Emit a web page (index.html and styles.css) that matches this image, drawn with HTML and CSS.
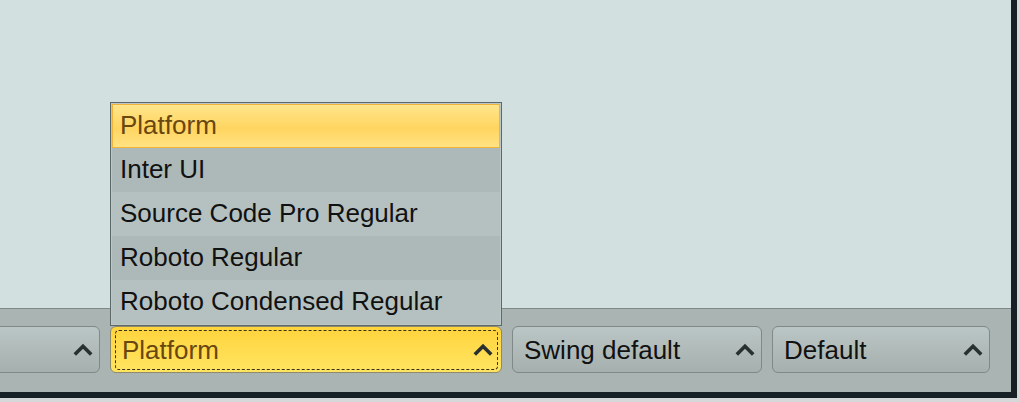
FILE: index.html
```html
<!DOCTYPE html>
<html>
<head>
<meta charset="utf-8">
<link rel="stylesheet" href="styles.css">
</head>
<body>
<div class="frame">
  <div class="content"></div>
  <div class="bar">
    <div class="combo combo-first">
      <span class="label"></span>
      <svg class="chev" width="20" height="14" viewBox="0 0 20 14"><polyline points="1.8,11.5 10,3.3 18.2,11.5"/></svg>
    </div>
    <div class="combo combo-active">
      <div class="focus"></div>
      <span class="label">Platform</span>
      <svg class="chev" width="20" height="14" viewBox="0 0 20 14"><polyline points="1.8,11.5 10,3.3 18.2,11.5"/></svg>
      <div class="popup">
        <div class="item selected">Platform</div>
        <div class="item odd">Inter UI</div>
        <div class="item even">Source Code Pro Regular</div>
        <div class="item odd">Roboto Regular</div>
        <div class="item even">Roboto Condensed Regular</div>
      </div>
    </div>
    <div class="combo combo-swing">
      <span class="label">Swing default</span>
      <svg class="chev" width="20" height="14" viewBox="0 0 20 14"><polyline points="1.8,11.5 10,3.3 18.2,11.5"/></svg>
    </div>
    <div class="combo combo-default">
      <span class="label">Default</span>
      <svg class="chev" width="20" height="14" viewBox="0 0 20 14"><polyline points="1.8,11.5 10,3.3 18.2,11.5"/></svg>
    </div>
  </div>
</div>
</body>
</html>
```
FILE: styles.css
```css
html, body {
  margin: 0;
  padding: 0;
}
body {
  background: #d4d8d8;
  width: 1020px;
  height: 402px;
  overflow: hidden;
  font-family: "Liberation Sans", Arial, Helvetica, sans-serif;
  font-size: 26px;
}
.frame {
  width: 1017px;
  height: 398px;
  box-sizing: border-box;
  border-right: 6px solid #172125;
  border-bottom: 6px solid #172125;
  display: flex;
  flex-direction: column;
  overflow: hidden;
}
.content {
  flex: 1;
  background: #d3e0e0;
}
.bar {
  height: 84px;
  box-sizing: border-box;
  border-top: 1px solid #7d8887;
  background: #aab4b2;
  display: flex;
  justify-content: flex-end;
  align-items: flex-start;
  gap: 10px;
  padding: 17px 21px 0 0;
}
.combo {
  position: relative;
  flex-shrink: 0;
  height: 47px;
  box-sizing: border-box;
  border: 1px solid #7f8988;
  border-radius: 6px;
  background: linear-gradient(#bac6c5, #a6b0ae);
  display: flex;
  align-items: center;
  padding: 0 6px 0 11px;
  color: #111;
  line-height: 44px;
}
.label {
  flex: 1;
  white-space: nowrap;
}
.chev {
  display: block;
  flex-shrink: 0;
}
.chev polyline {
  fill: none;
  stroke: #28312f;
  stroke-width: 3.6;
  stroke-linecap: butt;
  stroke-linejoin: miter;
}
.combo-first { width: 140px; }
.combo-active {
  width: 392px;
  border-color: #8e8a6c;
  background: linear-gradient(#ffd43c, #ffe461);
  color: #6a4710;
  padding-right: 8px;
}
.combo-swing { width: 250px; }
.combo-default { width: 218px; }
.focus {
  position: absolute;
  left: 4px;
  right: 3px;
  top: 3px;
  bottom: 2px;
  border: 1px dashed #3b3318;
  border-radius: 4px;
  pointer-events: none;
}
.popup {
  position: absolute;
  left: -1px;
  bottom: calc(100% + 1px);
  width: 392px;
  box-sizing: border-box;
  border: 1px solid #5d6868;
  background: #bcc7c6;
  padding: 1px;
  color: #111;
}
.item {
  height: 44px;
  box-sizing: border-box;
  border: 1px solid transparent;
  padding-left: 7px;
  line-height: 41px;
  white-space: nowrap;
}
.item.odd { background: #adb9b8; }
.item.even { background: #b5c1c0; }
.item.selected {
  border-color: #f1b33a;
  background: linear-gradient(#ffe58c, #ffd560 55%, #ffe283);
  color: #6a4710;
}
```
